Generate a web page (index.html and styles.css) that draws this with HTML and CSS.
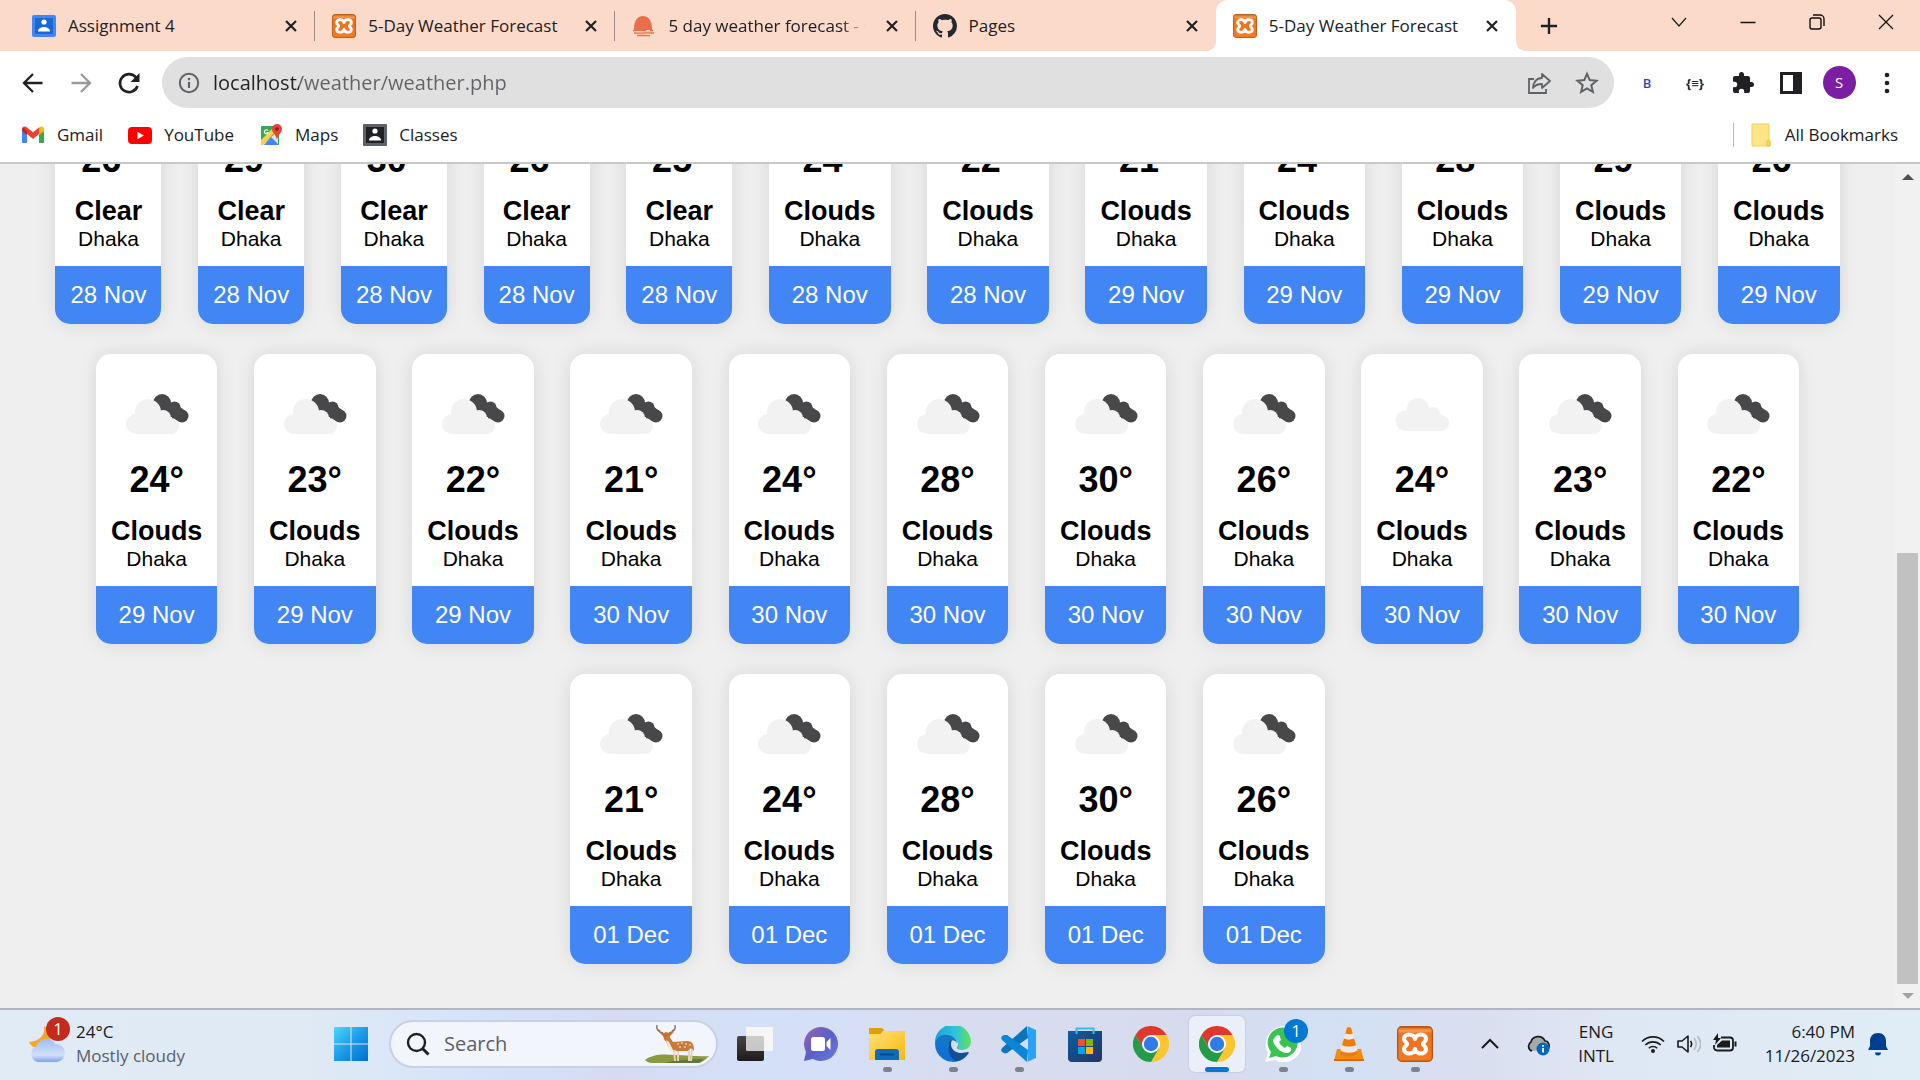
FILE: index.html
```html
<!DOCTYPE html>
<html lang="en">
<head>
<meta charset="utf-8">
<meta name="viewport" content="width=device-width, initial-scale=1">
<title>5-Day Weather Forecast</title>
<link rel="stylesheet" href="styles.css">
</head>
<body>
<svg class="defs" aria-hidden="true">
  <defs>
    <linearGradient id="g-xampp" x1="0" y1="0" x2="0" y2="1"><stop offset="0" stop-color="#d9600f"/><stop offset=".12" stop-color="#fb9a55"/><stop offset=".2" stop-color="#f0731f"/><stop offset="1" stop-color="#f47a22"/></linearGradient>
    <linearGradient id="g-win" x1="0" y1="0" x2="1" y2="1"><stop offset="0" stop-color="#4fd6ff"/><stop offset=".5" stop-color="#1b9be8"/><stop offset="1" stop-color="#0070ce"/></linearGradient>
    <linearGradient id="g-dark" x1="0" y1="0" x2="0" y2="1"><stop offset="0" stop-color="#484644"/><stop offset="1" stop-color="#1c1c1c"/></linearGradient>
    <linearGradient id="g-chat" x1="0" y1="0" x2="1" y2="1"><stop offset="0" stop-color="#9a63ad"/><stop offset=".5" stop-color="#5b5fc7"/><stop offset="1" stop-color="#6a7de0"/></linearGradient>
    <linearGradient id="g-folder" x1="0" y1="0" x2="1" y2="1"><stop offset="0" stop-color="#ffe07a"/><stop offset="1" stop-color="#fbb80a"/></linearGradient>
    <linearGradient id="g-edge1" x1="0" y1="0" x2="1" y2="0"><stop offset="0" stop-color="#1aa0d8"/><stop offset=".55" stop-color="#2ec3dc"/><stop offset="1" stop-color="#66e05a"/></linearGradient>
    <linearGradient id="g-edge2" x1="0" y1="0" x2="0" y2="1"><stop offset="0" stop-color="#1478c8"/><stop offset="1" stop-color="#0b6fd4"/></linearGradient>
    <linearGradient id="g-store" x1="0" y1="0" x2="1" y2="1"><stop offset="0" stop-color="#0a5ea8"/><stop offset="1" stop-color="#25335f"/></linearGradient>
    <linearGradient id="g-cloud" x1="0" y1="0" x2="0" y2="1"><stop offset="0" stop-color="#9fbcf0"/><stop offset=".7" stop-color="#d2e0fa"/><stop offset="1" stop-color="#7ea1ea"/></linearGradient>
    <symbol id="i-x" viewBox="0 0 14 14"><path d="M2 2l10 10M12 2L2 12" stroke="#202124" stroke-width="2.2" fill="none"/></symbol>
    <symbol id="i-xampp" viewBox="0 0 36 36"><rect x=".7" y=".7" width="34.6" height="34.6" rx="4" fill="url(#g-xampp)" stroke="#b9550f" stroke-width="1.4"/><path d="M18 13C17 7 7 7 7 13c0 3 3 3 3 5s-3 2-3 5c0 6 10 6 11 0 1 6 11 6 11 0 0-3-3-3-3-5s3-2 3-5c0-6-10-6-11 0z" fill="#f0731f" stroke="#fff" stroke-width="4.200" stroke-linejoin="round"/></symbol>
    <symbol id="i-chrome" viewBox="0 0 48 48"><path d="M24 12H44.8A24 24 0 0 0 3.2 12L13.6 30z" fill="#e0382c"/><path d="M34.4 30L24 48A24 24 0 0 0 44.8 12H24z" fill="#fdc62e"/><path d="M13.6 30L3.2 12A24 24 0 0 0 24 48L34.4 30z" fill="#249b48"/><circle cx="24" cy="24" r="12" fill="#fff"/><circle cx="24" cy="24" r="9.6" fill="#2f7bea"/></symbol>
    <symbol id="i-clouds" viewBox="0 0 90 90"><g fill="#48484a"><circle cx="50" cy="34" r="9"/><circle cx="62.500" cy="38.500" r="6"/><circle cx="70" cy="47" r="6.500"/><path d="M50 36l12-3 10 8-3 12-14-4z"/></g><g fill="#f2f2f2"><circle cx="36" cy="43" r="13"/><circle cx="24" cy="55" r="10"/><circle cx="51" cy="49" r="8"/><circle cx="59" cy="57" r="8"/><rect x="24" y="48" width="36" height="17"/></g></symbol>
    <symbol id="i-cloud" viewBox="0 0 90 90"><g fill="#f2f2f2"><circle cx="41" cy="40" r="11"/><circle cx="29" cy="51.500" r="10.500"/><circle cx="56" cy="45.500" r="7.500"/><circle cx="64" cy="54" r="8"/><rect x="28" y="45" width="36" height="17"/></g></symbol>
    <symbol id="i-person" viewBox="0 0 24 24"><circle cx="12" cy="8" r="2.600" fill="#fff"/><path d="M6 17.500c0-6 12-6 12 0z" fill="#fff"/></symbol>
  </defs>
</svg>

<header class="browser">
  <div class="tabstrip">
    <nav class="tabs" aria-label="Open tabs">
      <div class="tab">
        <svg class="favicon" viewBox="0 0 24 24"><rect y="1" width="24" height="22" rx="2" fill="#4285f4"/><rect x="3" y="4" width="18" height="16" fill="#1967d2"/><use href="#i-person"/></svg>
        <a class="tab-title" href="#">Assignment 4</a>
        <button class="tab-close" aria-label="Close tab"><svg><use href="#i-x"/></svg></button>
      </div>
      <div class="tab">
        <svg class="favicon"><use href="#i-xampp"/></svg>
        <a class="tab-title" href="#">5-Day Weather Forecast</a>
        <button class="tab-close" aria-label="Close tab"><svg><use href="#i-x"/></svg></button>
      </div>
      <div class="tab">
        <svg class="favicon" viewBox="0 0 24 24"><path d="M2 15C2 6 6 2 11 2s9 4 9 13v2H2z" fill="#eb6e4b"/><path d="M1 16.500h20M2 19h20M5 21.500h13" stroke="#eb6e4b" stroke-width="1.600"/><path d="M4 17.800h8M14 16.500h4M13 20.300h6" stroke="#fcdaca" stroke-width="1"/></svg>
        <a class="tab-title fade" href="#">5 day weather forecast - O</a>
        <button class="tab-close" aria-label="Close tab"><svg><use href="#i-x"/></svg></button>
      </div>
      <div class="tab">
        <svg class="favicon" viewBox="0 0 16 16"><path fill="#24292f" d="M8 0C3.580 0 0 3.580 0 8c0 3.540 2.290 6.530 5.470 7.590.4.070.55-.17.55-.38 0-.19-.01-.82-.01-1.490-2.010.37-2.530-.49-2.690-.94-.09-.23-.48-.94-.82-1.130-.28-.15-.68-.52-.01-.53.63-.01 1.080.58 1.230.82.72 1.210 1.870.87 2.330.66.07-.52.28-.87.51-1.070-1.780-.2-3.640-.89-3.640-3.950 0-.87.31-1.590.82-2.150-.08-.2-.36-1.020.08-2.120 0 0 .67-.21 2.200.82.64-.18 1.320-.27 2-.27s1.360.09 2 .27c1.530-1.040 2.200-.82 2.200-.82.44 1.100.16 1.920.08 2.120.51.56.82 1.270.82 2.150 0 3.070-1.870 3.750-3.650 3.950.29.25.54.73.54 1.480 0 1.070-.01 1.930-.01 2.200 0 .21.15.46.55.38A8.010 8.010 0 0 0 16 8c0-4.420-3.580-8-8-8z"/></svg>
        <a class="tab-title" href="#">Pages</a>
        <button class="tab-close" aria-label="Close tab"><svg><use href="#i-x"/></svg></button>
      </div>
      <div class="tab active" aria-current="page">
        <svg class="favicon"><use href="#i-xampp"/></svg>
        <a class="tab-title" href="#">5-Day Weather Forecast</a>
        <button class="tab-close" aria-label="Close tab"><svg><use href="#i-x"/></svg></button>
      </div>
    </nav>
    <button class="new-tab" aria-label="New tab"><svg viewBox="0 0 20 20"><path d="M10 1v18M1 10h18" stroke="#202124" stroke-width="2.600"/></svg></button>
    <div class="window-controls">
      <button aria-label="Search tabs"><svg viewBox="0 0 18 18"><path d="M2 5l7 8 7-8" fill="none" stroke="#222" stroke-width="1.300"/></svg></button>
      <button aria-label="Minimize"><svg viewBox="0 0 18 18"><path d="M1.500 9.500h15" stroke="#111" stroke-width="1.500"/></svg></button>
      <button aria-label="Restore"><svg viewBox="0 0 18 18"><rect x="2" y="5" width="11" height="11" rx="2" fill="none" stroke="#111" stroke-width="1.400"/><path d="M5 2h7a4 4 0 0 1 4 4v7" fill="none" stroke="#111" stroke-width="1.400"/></svg></button>
      <button aria-label="Close"><svg viewBox="0 0 18 18"><path d="M2 2l14 14M16 2L2 16" stroke="#111" stroke-width="1.300"/></svg></button>
    </div>
  </div>

  <div class="toolbar">
    <button class="tool" aria-label="Back"><svg viewBox="0 0 24 24"><path d="M21.500 12H4M12 3l-9 9 9 9" fill="none" stroke="#202124" stroke-width="2.300"/></svg></button>
    <button class="tool" aria-label="Forward"><svg viewBox="0 0 24 24"><path d="M2.500 12H20M12 3l9 9-9 9" fill="none" stroke="#9a9a9a" stroke-width="2.300"/></svg></button>
    <button class="tool" aria-label="Reload"><svg viewBox="0 0 24 24"><path d="M20.500 15A9 9 0 1 1 19 6.500" fill="none" stroke="#202124" stroke-width="2.600"/><path d="M22.500 2v9h-9z" fill="#202124"/></svg></button>
    <div class="omnibox">
      <svg class="icon" viewBox="0 0 24 24"><circle cx="12" cy="12" r="9.200" fill="none" stroke="#5f6368" stroke-width="2"/><path d="M12 11v6M12 7v2.300" stroke="#5f6368" stroke-width="2.200"/></svg>
      <input class="url" type="text" aria-label="Address" value="localhost/weather/weather.php">
      <button class="tool" aria-label="Share"><svg viewBox="0 0 24 24"><path d="M7 8H2v14h17v-4" fill="none" stroke="#5f6368" stroke-width="1.800"/><path d="M15 3l8 7-8 7v-4c-4 0-7 1-9 4 0-5 3-10 9-10z" fill="none" stroke="#5f6368" stroke-width="1.800" stroke-linejoin="round"/></svg></button>
      <button class="tool" aria-label="Bookmark"><svg viewBox="0 0 24 24"><path d="M12 2.800l2.700 6.300 6.800.6-5.200 4.500 1.600 6.700-5.900-3.600-5.900 3.600 1.600-6.700-5.200-4.500 6.800-.6z" fill="none" stroke="#5f6368" stroke-width="2"/></svg></button>
    </div>
    <button class="tool ext-b" aria-label="Extension B">B</button>
    <button class="tool ext-json" aria-label="JSON formatter">{≡}</button>
    <button class="tool" aria-label="Extensions"><svg viewBox="0 0 24 24"><path fill="#202124" d="M20.500 11H19V7a2 2 0 0 0-2-2h-4V3.500a2.500 2.500 0 0 0-5 0V5H4a2 2 0 0 0-2 2v3.800h1.500a2.700 2.700 0 0 1 0 5.400H2V20a2 2 0 0 0 2 2h3.800v-1.500a2.700 2.700 0 0 1 5.400 0V22H17a2 2 0 0 0 2-2v-4h1.500a2.500 2.500 0 0 0 0-5z"/></svg></button>
    <button class="tool" aria-label="Side panel"><svg viewBox="0 0 24 24"><path d="M1 1h22v22H1zM4 4v16h10V4z" fill="#202124" fill-rule="evenodd"/></svg></button>
    <button class="tool" aria-label="Profile"><span class="avatar">S</span></button>
    <button class="tool" aria-label="Menu"><svg viewBox="0 0 24 24"><g fill="#202124"><circle cx="12" cy="4" r="2.300"/><circle cx="12" cy="12" r="2.300"/><circle cx="12" cy="20" r="2.300"/></g></svg></button>
  </div>

  <nav class="bookmarks" aria-label="Bookmarks">
    <a href="#"><svg viewBox="0 0 24 24"><path d="M1 5v15h5V10z" fill="#4285f4"/><path d="M18 10v10h5V5z" fill="#34a853"/><path d="M1 6.500C1 3 4 3 6 4.500l6 4.800 6-4.800V11l-6 5-6-5-5-4z" fill="#ea4335"/><path d="M18 4.500C20 3 23 3 23 6.500V8l-5 4z" fill="#fbbc04"/><path d="M1 6.500V8l5 4V8L2.500 4.500z" fill="#c5221f"/></svg>Gmail</a>
    <a href="#"><svg viewBox="0 0 24 24"><rect y="4" width="24" height="17" rx="4" fill="#f00"/><path d="M9.500 8.800v7.400l6.300-3.700z" fill="#fff"/></svg>YouTube</a>
    <a href="#"><svg viewBox="0 0 24 24"><rect x="2" y="3" width="18" height="19" rx="1" fill="#34a853"/><path d="M3 22L19 8v14z" fill="#e3e6ea"/><path d="M2 17L16 3l4 2L4 22H2z" fill="#fdd048"/><path d="M5 22l7-8 8 8z" fill="#4285f4"/><path d="M18 1a5 5 0 0 0-5 5c0 4 4 5 5 11 1-6 5-7 5-11a5 5 0 0 0-5-5z" fill="#ea4335"/><circle cx="18" cy="6" r="1.800" fill="#8c1d18"/><path d="M9 7.500a2 2 0 1 0 .3 2H7.500" stroke="#fff" stroke-width="1.200" fill="none"/></svg>Maps</a>
    <a href="#"><svg viewBox="0 0 24 24"><rect y="1" width="24" height="22" rx="1" fill="#5f6368"/><rect x="3" y="4" width="18" height="16" fill="#202124"/><use href="#i-person"/></svg>Classes</a>
    <a class="all-bookmarks" href="#"><svg viewBox="0 0 24 24"><path d="M3 1h17v17h1v5H3z" fill="#ffe58a" stroke="#f5cf4a"/><path d="M18 23v-5a2 2 0 0 1 3 0v5z" fill="#ffd957" stroke="#efc02e"/></svg>All Bookmarks</a>
  </nav>
</header>

<div class="viewport">
  <main class="page">
    <ul class="forecast">
      <li class="card"><svg class="sky"></svg><h2>26°</h2><h3>Clear</h3><p>Dhaka</p><footer>28 Nov</footer></li>
      <li class="card"><svg class="sky"></svg><h2>29°</h2><h3>Clear</h3><p>Dhaka</p><footer>28 Nov</footer></li>
      <li class="card"><svg class="sky"></svg><h2>30°</h2><h3>Clear</h3><p>Dhaka</p><footer>28 Nov</footer></li>
      <li class="card"><svg class="sky"></svg><h2>26°</h2><h3>Clear</h3><p>Dhaka</p><footer>28 Nov</footer></li>
      <li class="card"><svg class="sky"></svg><h2>25°</h2><h3>Clear</h3><p>Dhaka</p><footer>28 Nov</footer></li>
      <li class="card"><svg class="sky"><use href="#i-clouds"/></svg><h2>24°</h2><h3>Clouds</h3><p>Dhaka</p><footer>28 Nov</footer></li>
      <li class="card"><svg class="sky"><use href="#i-clouds"/></svg><h2>22°</h2><h3>Clouds</h3><p>Dhaka</p><footer>28 Nov</footer></li>
      <li class="card"><svg class="sky"><use href="#i-clouds"/></svg><h2>21°</h2><h3>Clouds</h3><p>Dhaka</p><footer>29 Nov</footer></li>
      <li class="card"><svg class="sky"><use href="#i-clouds"/></svg><h2>24°</h2><h3>Clouds</h3><p>Dhaka</p><footer>29 Nov</footer></li>
      <li class="card"><svg class="sky"><use href="#i-clouds"/></svg><h2>28°</h2><h3>Clouds</h3><p>Dhaka</p><footer>29 Nov</footer></li>
      <li class="card"><svg class="sky"><use href="#i-clouds"/></svg><h2>29°</h2><h3>Clouds</h3><p>Dhaka</p><footer>29 Nov</footer></li>
      <li class="card"><svg class="sky"><use href="#i-clouds"/></svg><h2>26°</h2><h3>Clouds</h3><p>Dhaka</p><footer>29 Nov</footer></li>
      <li class="card"><svg class="sky"><use href="#i-clouds"/></svg><h2>24°</h2><h3>Clouds</h3><p>Dhaka</p><footer>29 Nov</footer></li>
      <li class="card"><svg class="sky"><use href="#i-clouds"/></svg><h2>23°</h2><h3>Clouds</h3><p>Dhaka</p><footer>29 Nov</footer></li>
      <li class="card"><svg class="sky"><use href="#i-clouds"/></svg><h2>22°</h2><h3>Clouds</h3><p>Dhaka</p><footer>29 Nov</footer></li>
      <li class="card"><svg class="sky"><use href="#i-clouds"/></svg><h2>21°</h2><h3>Clouds</h3><p>Dhaka</p><footer>30 Nov</footer></li>
      <li class="card"><svg class="sky"><use href="#i-clouds"/></svg><h2>24°</h2><h3>Clouds</h3><p>Dhaka</p><footer>30 Nov</footer></li>
      <li class="card"><svg class="sky"><use href="#i-clouds"/></svg><h2>28°</h2><h3>Clouds</h3><p>Dhaka</p><footer>30 Nov</footer></li>
      <li class="card"><svg class="sky"><use href="#i-clouds"/></svg><h2>30°</h2><h3>Clouds</h3><p>Dhaka</p><footer>30 Nov</footer></li>
      <li class="card"><svg class="sky"><use href="#i-clouds"/></svg><h2>26°</h2><h3>Clouds</h3><p>Dhaka</p><footer>30 Nov</footer></li>
      <li class="card"><svg class="sky"><use href="#i-cloud"/></svg><h2>24°</h2><h3>Clouds</h3><p>Dhaka</p><footer>30 Nov</footer></li>
      <li class="card"><svg class="sky"><use href="#i-clouds"/></svg><h2>23°</h2><h3>Clouds</h3><p>Dhaka</p><footer>30 Nov</footer></li>
      <li class="card"><svg class="sky"><use href="#i-clouds"/></svg><h2>22°</h2><h3>Clouds</h3><p>Dhaka</p><footer>30 Nov</footer></li>
      <li class="card"><svg class="sky"><use href="#i-clouds"/></svg><h2>21°</h2><h3>Clouds</h3><p>Dhaka</p><footer>01 Dec</footer></li>
      <li class="card"><svg class="sky"><use href="#i-clouds"/></svg><h2>24°</h2><h3>Clouds</h3><p>Dhaka</p><footer>01 Dec</footer></li>
      <li class="card"><svg class="sky"><use href="#i-clouds"/></svg><h2>28°</h2><h3>Clouds</h3><p>Dhaka</p><footer>01 Dec</footer></li>
      <li class="card"><svg class="sky"><use href="#i-clouds"/></svg><h2>30°</h2><h3>Clouds</h3><p>Dhaka</p><footer>01 Dec</footer></li>
      <li class="card"><svg class="sky"><use href="#i-clouds"/></svg><h2>26°</h2><h3>Clouds</h3><p>Dhaka</p><footer>01 Dec</footer></li>
    </ul>
  </main>
  <div class="scrollbar" aria-hidden="true">
    <svg viewBox="0 0 12 6"><path d="M0 6l6-6 6 6z" fill="#505050"/></svg>
    <div class="track"><div class="thumb"></div></div>
    <svg viewBox="0 0 12 6"><path d="M0 0h12L6 6z" fill="#a3a3a3"/></svg>
  </div>
</div>

<footer class="taskbar">
  <button class="weather" aria-label="Weather, 1 alert">
    <span class="weather-icon">
      <svg viewBox="0 0 36 36"><path d="M15 1c2 8-4 15-14 15 3 7 12 8 18 2C24 12 21 4 15 1z" fill="#f5a623"/><path d="M9 35a8 8 0 0 1-1-15 10 10 0 0 1 18-2 8.500 8.500 0 0 1 1 17z" fill="url(#g-cloud)"/></svg>
      <span class="badge alert">1</span>
    </span>
    <span class="weather-text"><span>24°C</span><span class="muted">Mostly cloudy</span></span>
  </button>

  <div class="apps">
    <button class="app" aria-label="Start"><svg viewBox="0 0 36 36"><path d="M1 1h16.500v16.500H1zM18.500 1H35v16.500H18.500zM1 18.500h16.500V35H1zM18.500 18.500H35V35H18.500z" fill="url(#g-win)"/></svg></button>
    <div class="search">
      <svg class="icon" viewBox="0 0 24 24"><circle cx="10.500" cy="10.500" r="8.500" fill="none" stroke="#1f1f1f" stroke-width="2.400"/><path d="M16.500 16.500l6 6" stroke="#1f1f1f" stroke-width="3"/></svg>
      <input type="search" aria-label="Search" placeholder="Search">
      <svg class="deer" viewBox="0 0 66 40"><path d="M1 36c8-6 18-6 30-5 12 0 24 2 34 1-3 3-6 6-10 7H8c-3 0-5-1-7-3z" fill="#8a9a3c"/><path d="M20 39c12-3 26-4 40-4l-5 4z" fill="#5f7a35"/><g stroke="#8a7460" stroke-width="1.500" fill="none"><path d="M19 9c-5-1-7-4-6-8M25 9c5-1 7-4 6-8M16 7l-3-2M28 7l3-2"/></g><path d="M15 8l5 1 2-1 3 1 5-1-4 4-1 3-2 2h-2l-2-5z" fill="#c8702e"/><path d="M21 13l4-1 4 6 14-1c5 0 7 3 7 9l-1 1-2-3-3 3H30c-5-1-7-6-9-14z" fill="#c97a3a"/><path d="M22 16l3 2 4 8 9 2-8 1c-4-1-6-6-8-13z" fill="#f4e8da"/><path d="M30 26l1 11M34 27v10M45 26v11M48 25l-1 12" stroke="#e7d3bd" stroke-width="2"/><g fill="#fff"><circle cx="34" cy="20" r=".8"/><circle cx="38" cy="19" r=".8"/><circle cx="42" cy="20" r=".8"/><circle cx="36" cy="23" r=".8"/><circle cx="41" cy="23" r=".8"/><circle cx="46" cy="21" r=".8"/></g></svg>
    </div>
    <button class="app" aria-label="Task view"><svg viewBox="0 0 36 36"><rect y="10" width="27" height="25" rx="2" fill="url(#g-dark)"/><rect x="9" y="1" width="27" height="24" rx="1.500" fill="#fafafa" fill-opacity=".75"/><path d="M27 1h9v24h-9zM9 1h18v9H9z" fill="#f5f5f5"/></svg></button>
    <button class="app" aria-label="Chat"><svg viewBox="0 0 36 36"><path d="M18 1a17 17 0 1 1-8 32l-9 2 2-9A17 17 0 0 1 18 1z" fill="url(#g-chat)"/><rect x="8" y="11" width="14" height="14" rx="2.500" fill="#fff"/><path d="M23.500 16l4-4v12l-4-4z" fill="#fff"/></svg></button>
    <button class="app open" aria-label="File Explorer"><svg viewBox="0 0 36 36"><path d="M0 2h13l3 3h-2l-3 4H0z" fill="#e0a006"/><path d="M0 8h12l4-3h20v29H0z" fill="url(#g-folder)"/><path d="M6 34v-8a3 3 0 0 1 3-3h18a3 3 0 0 1 3 3v8z" fill="#0f6cbd"/><path d="M11 28.500h14" stroke="#0a4a86" stroke-width="2"/></svg></button>
    <button class="app open" aria-label="Edge"><svg viewBox="0 0 36 36"><path d="M0 18A18 18 0 1 1 36 15c0 6-4 9-9 9-3 0-6-1-5-3 2-2 1-7-4-9C10 8 3 10 0 18z" fill="url(#g-edge1)"/><path d="M0 18c1-7 7-10 12-9 6 0 10 5 10 8-3-5-9-2-8 4 1 8 7 12 12 13A18 18 0 0 1 0 18z" fill="url(#g-edge2)"/><path d="M14 20c-1-3 1-6 3-6-3 6 1 13 9 13 3 0 6-1 7-1 1 0 1 1 0 2-3 4-6 7-12 7-7-3-8-10-7-15z" fill="#124f96"/></svg></button>
    <button class="app open" aria-label="Visual Studio Code"><svg viewBox="0 0 36 36"><path d="M26 0L1 22c-1 1-1 3 0 4l2 1c1 1 2 0 3 0L27 12z" fill="#0b74bb"/><path d="M26 36L1 14c-1-1-1-3 0-4l2-1h3l21 15z" fill="#0a86d4"/><path d="M26 0l9 4v28l-9 4c1-1 1-2 1-3V3c0-1 0-2-1-3z" fill="#29a3f5"/></svg></button>
    <button class="app" aria-label="Microsoft Store"><svg viewBox="0 0 36 36"><path d="M9.500 8V2.500h17V8" fill="none" stroke="#35bdf0" stroke-width="2"/><path d="M1 5h34v27a4 4 0 0 1-4 4H5a4 4 0 0 1-4-4z" fill="url(#g-store)"/><path d="M9.500 5v3M26.500 5v3" stroke="#35bdf0" stroke-width="2"/><path d="M11 13h7v7h-7z" fill="#f25022"/><path d="M19 13h7v7h-7z" fill="#7fba00"/><path d="M11 21h7v7h-7z" fill="#00a4ef"/><path d="M19 21h7v7h-7z" fill="#ffb900"/></svg></button>
    <button class="app" aria-label="Chrome"><svg><use href="#i-chrome"/></svg></button>
    <button class="app current" aria-label="Chrome, active window"><svg><use href="#i-chrome"/></svg></button>
    <button class="app open" aria-label="WhatsApp, 1 unread"><svg viewBox="0 0 36 36"><path d="M0 36l3-9A18 18 0 1 1 10 34z" fill="#fff"/><path d="M4 32l2-6A15 15 0 1 1 11 30z" fill="#3ac351"/><path d="M11 10c2-2 4-1 4 1l1 3-2 2c1 3 4 5 6 6l2-2 4 2c1 1 0 4-3 5-7 1-15-8-15-13z" fill="#fff"/></svg><span class="badge unread">1</span></button>
    <button class="app open" aria-label="VLC"><svg viewBox="0 0 36 36"><path d="M6 23h24l3 12H3z" fill="#f58a0b"/><path d="M3 33h30v2H3z" fill="#d86800"/><path d="M15.500 3c0-3 5-3 5 0l7 25c-4 3-15 3-19 0z" fill="#e9e9e9"/><path d="M15.300 4c0-4 5.400-4 5.400 0l1 3.500c-2 1-5 1-7.400 0zM13 12.500c3 1.500 7 1.500 10 0l2 6.500c-4 2-10 2-14 0zM9.500 24.500c4 3 13 3 17 0l1 3.500c-4 3.500-15 3.500-19 0z" fill="#f07c08"/></svg></button>
    <button class="app open" aria-label="XAMPP"><svg><use href="#i-xampp"/></svg></button>
  </div>

  <div class="tray">
    <button class="tray-icon" aria-label="Show hidden icons"><svg viewBox="0 0 24 24"><path d="M4 16l8-8 8 8" fill="none" stroke="#1b1b1b" stroke-width="2"/></svg></button>
    <button class="tray-icon" aria-label="OneDrive"><svg viewBox="0 0 24 24"><path d="M6 19a5 5 0 0 1-1-9c1-6 11-8 14-1 4 0 5 5 3 8" fill="#a8a8a8" stroke="#1b1b1b" stroke-width="1.700"/><circle cx="17" cy="17" r="6.500" fill="#0067c0"/><path d="M17 16v4.500M17 13v1.800" stroke="#fff" stroke-width="1.800"/></svg></button>
    <button class="language" aria-label="Input language"><span>ENG</span><span>INTL</span></button>
    <button class="status" aria-label="Network, volume and battery">
      <svg viewBox="0 0 24 24"><g fill="none" stroke="#1b1b1b" stroke-width="1.600"><path d="M1 9.500a15.500 15.500 0 0 1 22 0M4.300 13a11 11 0 0 1 15.400 0M7.800 16.200a6 6 0 0 1 8.400 0"/></g><circle cx="12" cy="19" r="2" fill="#1b1b1b"/></svg>
      <svg viewBox="0 0 24 24"><path d="M1 9h4l6-5v16l-6-5H1z" fill="none" stroke="#1b1b1b" stroke-width="1.600" stroke-linejoin="round"/><path d="M13.500 9c1.500 2 1.500 4 0 6" fill="none" stroke="#1b1b1b" stroke-width="1.600"/><path d="M17 6c3 4 3 8 0 12M20.500 4c4 5 4 11 0 16" fill="none" stroke="#b5bcc4" stroke-width="1.600"/></svg>
      <svg viewBox="0 0 24 24"><path d="M8 5.500h9a3 3 0 0 1 3 3v7a3 3 0 0 1-3 3H4a3 3 0 0 1-3-3V13" fill="none" stroke="#1b1b1b" stroke-width="1.800"/><path d="M9 8.500h8v7H4V13z" fill="#1b1b1b"/><path d="M21.500 9.500h2v5h-2z" fill="#1b1b1b"/><path d="M5 1L0 8h3l-1 5 6-7H5z" fill="#1b1b1b"/></svg>
    </button>
    <button class="clock"><span>6:40 PM</span><span>11/26/2023</span></button>
    <button class="bell" aria-label="Notifications"><svg viewBox="0 0 24 24"><path d="M12 1c-5 0-8 3.500-8 8v5l-2 4h20l-2-4V9c0-4.500-3-8-8-8zM9 20.500h6a3 3 0 0 1-6 0z" fill="#003e92"/></svg></button>
  </div>
</footer>
</body>
</html>
```
FILE: styles.css
```css
* { box-sizing: border-box; }

body {
  margin: 0;
  height: 100vh;
  display: flex;
  flex-direction: column;
  overflow: hidden;
  font: 18px/24px "Open Sans", "Noto Sans", sans-serif;
  color: #202124;
  background: #fff;
}

button {
  margin: 0;
  padding: 0;
  border: 0;
  background: none;
  font: inherit;
  color: inherit;
  display: flex;
  align-items: center;
  justify-content: center;
}

a { color: inherit; text-decoration: none; }
svg { display: block; flex: none; }
input { border: 0; padding: 0; outline: 0; background: none; font: inherit; min-width: 0; }

.defs { position: absolute; width: 0; height: 0; }

/* Browser chrome */
.browser { flex: none; border-bottom: 2px solid #c8c8c8; }

.tabstrip {
  display: flex;
  height: 51px;
  padding-left: 15px;
  background: #fcdaca;
}

.tabs { display: flex; flex: 0 1 1501px; min-width: 0; }

.tab {
  flex: 1 1 0;
  min-width: 0;
  display: flex;
  align-items: center;
  gap: 12px;
  padding: 0 16px 0 17px;
  position: relative;
  font-size: 17px;
}

.tab:nth-child(-n+3)::after {
  content: "";
  position: absolute;
  right: 0;
  top: 11px;
  width: 1px;
  height: 30px;
  background: #a08b82;
}

.favicon { width: 24px; height: 24px; }
.tab-title { flex: 1; min-width: 0; overflow: hidden; white-space: nowrap; }
.fade { mask-image: linear-gradient(90deg, #000 85%, transparent 97%); }
.tab-close { width: 16px; height: 24px; }
.tab-close svg { width: 14px; height: 14px; }

.tab.active { background: #fff; border-radius: 12px 12px 0 0; }

.tab.active::before,
.tab.active::after {
  content: "";
  position: absolute;
  bottom: 0;
  width: 10px;
  height: 10px;
}

.tab.active::before { left: -10px; background: radial-gradient(circle at 0 0, transparent 10px, #fff 10px); }
.tab.active::after { right: -10px; background: radial-gradient(circle at 100% 0, transparent 10px, #fff 10px); }

.new-tab { width: 66px; }
.new-tab svg { width: 18px; height: 18px; }

.window-controls { display: flex; margin-left: auto; height: 44px; }
.window-controls button { width: 69px; }
.window-controls svg { width: 18px; height: 18px; }

.toolbar {
  display: flex;
  align-items: center;
  height: 63px;
  padding: 0 9px;
}

.tool { width: 48px; height: 48px; flex: none; }
.tool svg { width: 24px; height: 24px; }

.omnibox {
  flex: 1;
  min-width: 0;
  display: flex;
  align-items: center;
  height: 51px;
  margin: 0 9px;
  padding: 0 3px 0 15px;
  border-radius: 26px;
  background: #e0e0e0;
}

.icon { width: 24px; height: 24px; }

.url {
  flex: 1;
  height: 32px;
  margin-left: 12px;
  font-size: 20px;
  color: transparent;
  background: linear-gradient(90deg, #202124 86px, #5f6368 86px);
  background-clip: text;
  -webkit-background-clip: text;
}

.ext-b { color: #3f3fb5; font-size: 13px; font-weight: 600; }
.ext-json { font-size: 13px; font-weight: 700; }

.avatar {
  width: 33px;
  height: 33px;
  border-radius: 50%;
  background: #7b1fa2;
  color: #fff;
  font-size: 15px;
  line-height: 33px;
  text-align: center;
}

.bookmarks {
  display: flex;
  align-items: center;
  gap: 25px;
  height: 48px;
  padding: 0 22px 6px 21px;
  font-size: 17px;
}

.bookmarks a { display: flex; align-items: center; gap: 12px; }
.bookmarks svg { width: 24px; height: 24px; }
.bookmarks .all-bookmarks { margin-left: auto; padding-left: 15px; border-left: 1px solid #b8b8b8; }

/* Forecast page */
.viewport { flex: 1; min-height: 0; display: flex; background: #efefef; }

.page {
  flex: 1;
  min-width: 0;
  display: flex;
  flex-direction: column;
  justify-content: flex-end;
  overflow: hidden;
  font-family: "Liberation Sans", Arial, sans-serif;
  color: #000;
}

.forecast {
  margin: 0;
  padding: 0 10px 29px;
  list-style: none;
  font-size: 24px;
  text-align: center;
}

.card {
  display: inline-flex;
  flex-direction: column;
  align-items: center;
  vertical-align: top;
  margin: 15px;
  padding-top: 15px;
  border-radius: 15px;
  background: #fff;
  box-shadow: 0 0 20px rgba(0, 0, 0, 0.1);
  overflow: hidden;
}

.sky { width: 90px; height: 90px; }
.card h2, .card h3, .card p { margin: 0; padding: 0 15px; }
.card h2 { font-size: 36px; line-height: 41px; margin-bottom: 16px; }
.card h3 { font-size: 27px; line-height: 31px; }
.card p { font-size: 21px; line-height: 24px; margin-bottom: 15px; }

.card footer {
  align-self: stretch;
  padding: 15px;
  background: #4285f4;
  color: #fff;
  line-height: 28px;
}

.scrollbar {
  flex: none;
  width: 25px;
  display: flex;
  flex-direction: column;
  align-items: center;
  padding: 10px 0 9px;
  background: #f1f1f1;
}

.scrollbar svg { width: 12px; height: 6px; }
.track { flex: 1; width: 21px; display: flex; flex-direction: column; justify-content: flex-end; padding: 5px 0 9px; }
.thumb { height: 54%; background: #c1c1c1; }

/* Taskbar */
.taskbar {
  flex: none;
  display: flex;
  align-items: center;
  height: 72px;
  padding-bottom: 2px;
  border-top: 2px solid #b0b7c3;
  background: linear-gradient(90deg, #e0ebf5 0, #e0eaf5 16%, #d5e2f8 25%, #d5dcf2 32%, #d4e0f8 40%, #d7dcef 52%, #d6dbee 62%, #d3e0f4 70%, #dadff0 77%, #dfe9f5 86%, #e0ecf6 100%);
  color: #1b1b1b;
}

.weather { flex: 0 0 318px; justify-content: flex-start; gap: 10px; padding-left: 28px; text-align: left; }
.weather-icon { position: relative; width: 38px; height: 38px; }
.weather-icon svg { width: 38px; height: 38px; }
.weather-text, .language, .clock { display: flex; flex-direction: column; font-size: 17px; }
.muted { color: #5a6068; }

.badge {
  position: absolute;
  width: 24px;
  height: 24px;
  border-radius: 50%;
  color: #fff;
  font-size: 16px;
  line-height: 24px;
  text-align: center;
}

.alert { top: -8px; right: -4px; background: #c42b1c; }
.unread { top: 3px; right: 3px; background: #0078d4; }

.apps { display: flex; align-items: center; }
.app { position: relative; width: 56px; height: 56px; margin: 0 5px; border-radius: 6px; }
.app svg { width: 36px; height: 36px; }

.app.open::after,
.app.current::after {
  content: "";
  position: absolute;
  bottom: 0;
  left: 50%;
  width: 9px;
  height: 5px;
  margin-left: -4px;
  border-radius: 3px;
  background: #7d828c;
}

.app.current { background: #eaeff9; box-shadow: 0 0 2px rgba(0, 0, 0, 0.2); }
.app.current::after { width: 24px; margin-left: -12px; background: #0078d4; }

.search {
  display: flex;
  align-items: center;
  width: 329px;
  height: 48px;
  margin: 0 4px 0 5px;
  padding: 0 6px 0 15px;
  border: 2px solid #c8d0e4;
  border-radius: 24px;
  background: #f2f5fc;
}

.search input { flex: 1; margin-left: 14px; font-size: 20px; appearance: none; }
.search input::placeholder { color: #5c5f66; opacity: 1; }
.deer { width: 66px; height: 40px; }

.tray { display: flex; align-items: center; margin-left: auto; padding-right: 30px; }
.tray svg { width: 24px; height: 24px; }
.tray-icon { width: 48px; height: 48px; }
.language { margin: 0 27px 0 16px; }
.status { gap: 12px; }
.clock { width: 118px; align-items: flex-end; }
.bell { margin-left: 11px; }
```
